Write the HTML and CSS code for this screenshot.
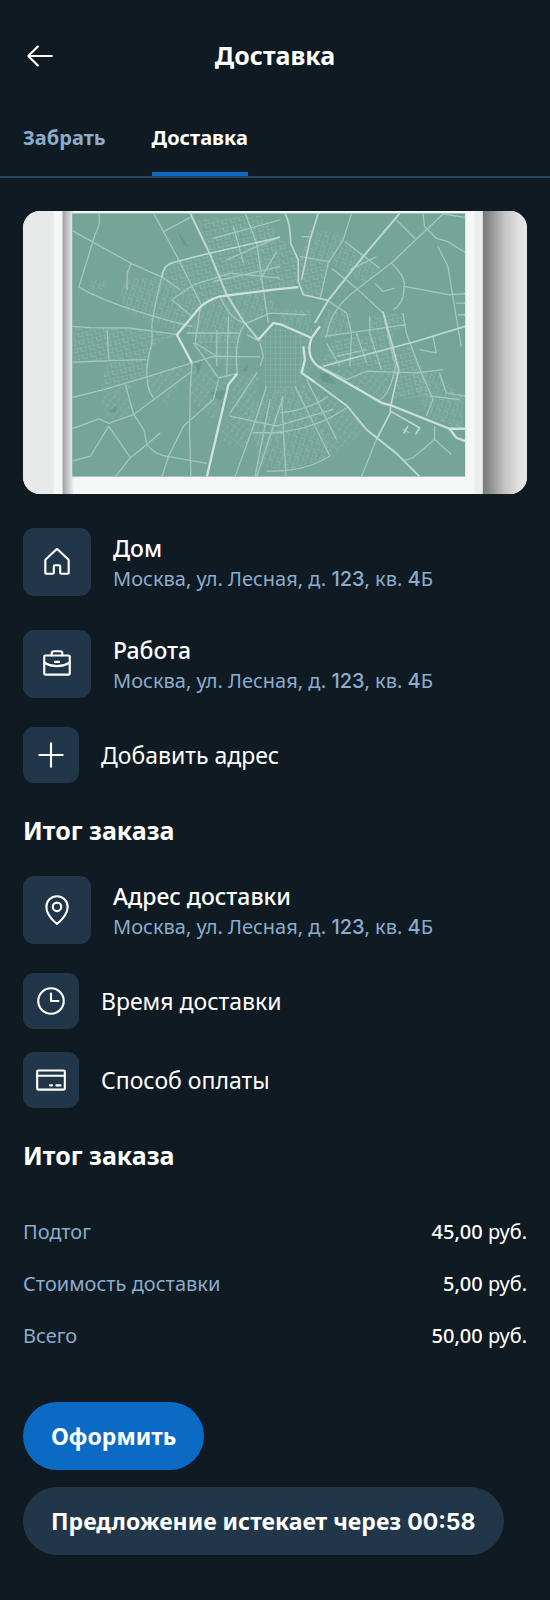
FILE: index.html
```
<!DOCTYPE html>
<html lang="ru">
<head>
  <meta charset="UTF-8">
  <title>Доставка</title>
  <meta name="viewport" content="width=device-width, initial-scale=1">
  <link rel="stylesheet" href="styles.css">
</head>
<body>
  <header class="topbar">
    <button type="button" class="back" aria-label="Назад">
      <svg class="icon" viewBox="0 0 256 256"><path d="M216 128H40M112 56L40 128L112 200"/></svg>
    </button>
    <h1>Доставка</h1>
  </header>
  <nav class="tabs">
    <a href="#pickup">Забрать</a>
    <a href="#delivery" class="active">Доставка</a>
  </nav>
  <main>
    <div class="map">
      <svg viewBox="67 33 1516 852" role="img" aria-label="Карта">
        <defs>
          <linearGradient id="edgeLeft">
            <stop offset="0" stop-color="#9fa1a2"/>
            <stop offset=".35" stop-color="#bcbebf"/>
            <stop offset="1" stop-color="#f2f3f3"/>
          </linearGradient>
          <linearGradient id="edgeRight">
            <stop offset="0" stop-color="#777877"/>
            <stop offset=".15" stop-color="#8b8c8b"/>
            <stop offset=".5" stop-color="#c4c5c4"/>
            <stop offset=".8" stop-color="#dedfde"/>
            <stop offset="1" stop-color="#e6e7e6"/>
          </linearGradient>
          <pattern id="gridA" width="26" height="22" patternUnits="userSpaceOnUse" patternTransform="rotate(-12)">
            <path d="M0 0H26M0 0V22M13 0V12M13 12H26"/>
          </pattern>
          <pattern id="gridB" width="24" height="30" patternUnits="userSpaceOnUse" patternTransform="rotate(18)">
            <path d="M0 0H24M0 0V30M12 10V30M0 10H12"/>
          </pattern>
          <pattern id="gridC" width="18" height="34" patternUnits="userSpaceOnUse" patternTransform="rotate(38)">
            <path d="M0 0H18M0 0V34M0 17H9"/>
          </pattern>
          <pattern id="gridD" width="15" height="17" patternUnits="userSpaceOnUse">
            <path d="M0 0H15M0 0V17"/>
          </pattern>
          <clipPath id="sheet"><rect x="215" y="40" width="1182" height="792"/></clipPath>
        </defs>
        <rect x="67" y="33" width="1516" height="852" fill="#f5f6f6"/>
        <rect x="67" y="33" width="92" height="852" fill="#e8e9e9"/>
        <rect x="186" y="33" width="34" height="852" fill="url(#edgeLeft)"/>
        <rect x="1425" y="33" width="24" height="852" fill="#eceded"/>
        <rect x="1450" y="33" width="133" height="852" fill="url(#edgeRight)"/>
        <rect x="215" y="40" width="1182" height="792" fill="#75a598"/>
        <g clip-path="url(#sheet)">
          <g class="blocks">
            <path fill="url(#gridA)" d="M500 190L628 160L770 125L840 110L890 170L890 265L660 290L600 320L540 270L485 232ZM590 60L780 45L840 110L630 160ZM900 180L990 190L960 300L900 285ZM1100 410L1180 400L1190 510L1060 500L960 500L1000 420Z"/>
            <path fill="url(#gridA)" d="M220 380L440 388L530 405L455 440L440 530L300 570L320 490L220 480ZM1190 450L1240 440L1300 590L1180 600ZM1110 350L1210 340L1220 380L1160 400L1110 400Z"/>
            <path fill="url(#gridB)" d="M380 240L480 232L540 270L600 320L535 400L370 330L360 270ZM600 322L660 290L790 280L840 330L735 375L720 430L600 430L560 400ZM930 90L1040 100L990 190L900 180ZM1035 130L1140 200L1100 250L990 190ZM1230 510L1310 520L1390 590L1390 690L1280 650Z"/>
            <path fill="url(#gridB)" d="M800 580L910 550L1000 770L860 815L780 800L740 640ZM980 330L1050 340L1060 400L960 420ZM270 240L310 240L320 270L270 270ZM840 330L930 330L940 400L840 370Z"/>
            <path fill="url(#gridC)" d="M575 490L700 535L640 660L570 600ZM440 530L575 495L500 620L440 580ZM900 550L1030 620L1110 690L990 770ZM700 540L780 510L740 760L660 720ZM300 590L390 550L400 650L320 660ZM960 510L1180 510L1150 600Z"/>
            <path fill="url(#gridD)" d="M780 420L830 380L935 420L910 480L920 530L840 590L790 560ZM580 400L720 400L715 520L620 470Z"/>
          </g>
          <g class="parks">
            <path d="M960 520L985 522L1010 555L965 545ZM630 580L680 570L660 605ZM585 495L605 485L595 525ZM530 90L565 140L550 135ZM325 635L350 620L345 640ZM725 515L745 490L740 515Z"/>
          </g>
          <g class="streets">
            <path d="M295 40Q302 70 285 100L235 262Q300 300 410 334T575 380M215 92L395 192L485 232L540 270M392 192L380 222V270M460 40L530 170L605 318M490 95L570 52M735 40L770 130L805 370M640 115L840 60M215 380L270 384L385 385L535 405M320 390L325 480M215 488L330 483L435 480"/>
            <path d="M215 594L310 570L440 532L575 490L640 470L780 472M215 688L295 658L325 672L400 645L575 515M325 680L270 770L215 785M325 680L390 775L345 832M390 775L440 735L480 700M375 555L390 610L400 645L430 690L440 735Q465 768 505 772L620 792"/>
            <path d="M485 232Q468 290 455 370L455 430Q435 500 440 532Q440 570 460 595M575 490L570 570L568 700L572 832M655 540L640 600L550 680L505 770L485 832M580 430L655 535L710 522M515 300L575 350M515 300L580 255L690 220L840 235M640 245L840 200M660 290Q690 360 730 368"/>
            <path d="M735 370Q700 420 712 520M730 375L810 340L920 345M740 405L780 425M780 430L790 470L780 500M700 80L730 190M680 180L840 110M560 400H720M600 325L585 430L650 470M685 350L680 530M650 390V500"/>
            <path d="M770 520L690 640M800 560L760 680L705 832M850 590L770 832M810 600L765 832M845 600L858 832M820 700Q950 690 1040 625M760 700L850 700M800 815Q910 820 990 770M885 560L990 770M920 540L1010 720M690 650L830 680L1000 630M840 640Q930 630 985 590"/>
            <path d="M1055 40L1030 120L985 190L960 300M905 110H935M1035 125L1140 205M995 205L1070 265L1150 340L1185 490M1190 60L1250 120M1270 40L1275 80L1310 115L1345 125L1397 158M1315 140L1345 200L1385 440M1175 190Q1220 230 1213 260L1350 285L1397 282M1213 260Q1215 310 1180 330"/>
            <path d="M1397 52L1330 42L1180 185L1070 270Q990 330 980 410M900 170L990 185M980 300L1040 340L1055 400L1050 500M975 410L1220 375M1210 340L1220 400L1265 520L1300 600L1280 650M1110 350V400L1145 510M1070 400L1100 490M980 430L1020 500M1010 470L1100 450M1300 410L1310 460L1260 450"/>
            <path d="M960 500L1040 540L1100 515L1250 520L1330 510M1320 520L1340 580L1397 590M1290 590L1380 600M1305 680V720L1240 775L1210 785M1305 720L1355 765M1230 700L1210 690M1085 832L1130 720L1172 640M1190 490Q1170 590 1140 600M1370 310H1397M1375 345H1397M830 155L780 240M1050 210L1130 170M1125 250L1150 275L1185 265"/>
          </g>
          <g class="avenues">
            <path d="M485 232Q486 215 495 202Q506 190 530 185L628 160L770 128L840 112"/>
            <path d="M855 40Q872 70 872 130L895 180V245L910 285L985 302M955 40L930 120L905 240"/>
            <path d="M570 40L628 160L680 285L730 365L775 420" stroke-width="6"/>
            <path d="M1200 40L1090 170L985 302L945 370" stroke-width="6"/>
            <path d="M970 500L1080 470L1240 428L1397 380"/>
            <path d="M945 548L1040 618L1100 690L1190 762L1260 832" stroke-width="6"/>
            <path d="M1150 335L1180 445L1197 510L1172 625L1172 640L1130 720"/>
            <path d="M1172 635L1260 685L1248 705M1225 680L1212 702"/>
          </g>
          <g class="highways">
            <path d="M895 262L840 267L660 290Q625 300 600 322L530 405L575 490"/>
            <path d="M775 420L820 370L845 375L935 415L960 380M935 415Q915 470 955 500L1150 612L1175 618L1350 688H1397M1350 688L1370 715L1397 725"/>
            <path d="M910 440L915 480L905 520L945 548M712 522L685 555L620 832"/>
          </g>
        </g>
      </svg>
    </div>
    <ul class="list">
      <li class="row address">
        <span class="tile"><svg class="icon" viewBox="0 0 256 256"><path d="M152 208V160a8 8 0 0 0-8-8H112a8 8 0 0 0-8 8v48a8 8 0 0 1-8 8H48a8 8 0 0 1-8-8V115.5a8 8 0 0 1 2.6-5.9l80-75.5a8 8 0 0 1 10.8 0l80 75.5a8 8 0 0 1 2.6 5.9V208a8 8 0 0 1-8 8H160A8 8 0 0 1 152 208Z"/></svg></span>
        <div>
          <p class="name">Дом</p>
          <p class="sub">Москва, ул. Лесная, д. <span class="num">123</span>, кв. <span class="num">4</span>Б</p>
        </div>
      </li>
      <li class="row address">
        <span class="tile"><svg class="icon" viewBox="0 0 256 256"><rect x="32" y="64" width="192" height="144" rx="8"/><path d="M168 64V48a16 16 0 0 0-16-16H104A16 16 0 0 0 88 48V64M112 112H144M224 118.3A191 191 0 0 1 128 144a191 191 0 0 1-96-25.7"/></svg></span>
        <div>
          <p class="name">Работа</p>
          <p class="sub">Москва, ул. Лесная, д. <span class="num">123</span>, кв. <span class="num">4</span>Б</p>
        </div>
      </li>
      <li class="row">
        <span class="tile"><svg class="icon" viewBox="0 0 256 256"><path d="M40 128H216M128 40V216"/></svg></span>
        <p>Добавить адрес</p>
      </li>
    </ul>
    <h2>Итог заказа</h2>
    <ul class="list">
      <li class="row address">
        <span class="tile"><svg class="icon" viewBox="0 0 256 256"><circle cx="128" cy="104" r="32"/><path d="M208 104c0 72-80 128-80 128S48 176 48 104a80 80 0 0 1 160 0Z"/></svg></span>
        <div>
          <p class="name">Адрес доставки</p>
          <p class="sub">Москва, ул. Лесная, д. <span class="num">123</span>, кв. <span class="num">4</span>Б</p>
        </div>
      </li>
      <li class="row">
        <span class="tile"><svg class="icon" viewBox="0 0 256 256"><circle cx="128" cy="128" r="96"/><path d="M128 72V128H184"/></svg></span>
        <p>Время доставки</p>
      </li>
      <li class="row">
        <span class="tile"><svg class="icon" viewBox="0 0 256 256"><rect x="24" y="56" width="208" height="144" rx="8"/><path d="M168 168H200M120 168H136M24 96H232"/></svg></span>
        <p>Способ оплаты</p>
      </li>
    </ul>
    <h2>Итог заказа</h2>
    <dl class="totals">
      <div><dt>Подтог</dt><dd><b>45,00</b> руб.</dd></div>
      <div><dt>Стоимость доставки</dt><dd><b>5,00</b> руб.</dd></div>
      <div><dt>Всего</dt><dd><b>50,00</b> руб.</dd></div>
    </dl>
    <div class="actions">
      <button type="button" class="btn primary">Оформить</button>
      <button type="button" class="btn">Предложение истекает через <span class="num">00:58</span></button>
    </div>
  </main>
</body>
</html>
```
FILE: styles.css
```
* {
  box-sizing: border-box;
}
body {
  margin: 0;
  background: #101a22;
  color: #fff;
  font-family: "Noto Sans", sans-serif;
  font-size: 20px;
  line-height: 30px;
}
h1, h2, p, ul, dl, dd {
  margin: 0;
  padding: 0;
}
button {
  font: inherit;
  color: inherit;
  border: none;
  cursor: pointer;
}
.icon {
  display: block;
  width: 34px;
  height: 34px;
  fill: none;
  stroke: #fff;
  stroke-width: 16;
  stroke-linecap: round;
  stroke-linejoin: round;
}
.topbar {
  display: flex;
  align-items: center;
  padding: 22px 23px 12px;
}
.back {
  width: 68px;
  height: 67px;
  padding: 0;
  background: none;
}
.topbar h1 {
  flex: 1;
  padding: 0 68px 2px 0;
  font-size: 25px;
  text-align: center;
}
.tabs {
  display: flex;
  gap: 46px;
  padding: 0 23px;
  border-bottom: 2px solid #27435a;
}
.tabs a {
  padding: 22px 0 19px;
  border-bottom: 4px solid transparent;
  color: #8baccd;
  font-weight: 700;
  text-decoration: none;
}
.tabs .active {
  border-color: #0b6bc4;
  color: #fff;
}
.map {
  margin: 33px 23px 17px;
  border-radius: 17px;
  overflow: hidden;
}
.map svg {
  display: block;
  width: 100%;
}
.blocks {
  opacity: 0.5;
}
pattern path {
  fill: none;
  stroke: #b4d2c7;
  stroke-width: 2;
}
.parks {
  fill: #659a8c;
}
.streets, .avenues, .highways {
  fill: none;
  stroke-linejoin: round;
}
.streets {
  stroke: #a3c8bb;
  stroke-width: 4;
}
.avenues {
  stroke: #bdd8ce;
  stroke-width: 5;
}
.highways {
  stroke: #cfe2da;
  stroke-width: 7;
}
.list {
  list-style: none;
}
.row {
  display: flex;
  align-items: center;
  gap: 22px;
  min-height: 79px;
  padding: 0 23px;
  font-size: 23px;
}
.address {
  min-height: 102px;
}
.tile {
  display: flex;
  flex: none;
  align-items: center;
  justify-content: center;
  width: 56px;
  height: 56px;
  border-radius: 11px;
  background: #22364a;
}
.address .tile {
  width: 68px;
  height: 68px;
}
.name {
  padding-top: 2px;
  line-height: 32px;
  font-weight: 500;
}
.sub {
  font-size: 20px;
  color: #8baccd;
}
.num {
  font-family: "Inter", sans-serif;
  font-weight: 500;
}
h2 {
  padding: 20px 23px 13px;
  font-size: 25px;
  line-height: 32px;
}
.totals {
  padding: 22px 23px;
}
.totals div {
  display: flex;
  justify-content: space-between;
  padding: 11px 0;
}
.totals dt {
  color: #8baccd;
}
.totals b {
  font-weight: 500;
}
.actions {
  display: flex;
  flex-direction: column;
  align-items: flex-start;
  gap: 17px;
  padding: 18px 23px;
}
.btn {
  min-height: 68px;
  padding: 0 28px;
  border-radius: 34px;
  background: #22364a;
  font-size: 23px;
  font-weight: 700;
}
.btn .num {
  font-weight: 700;
}
.primary {
  background: #0b6bc4;
}
```
